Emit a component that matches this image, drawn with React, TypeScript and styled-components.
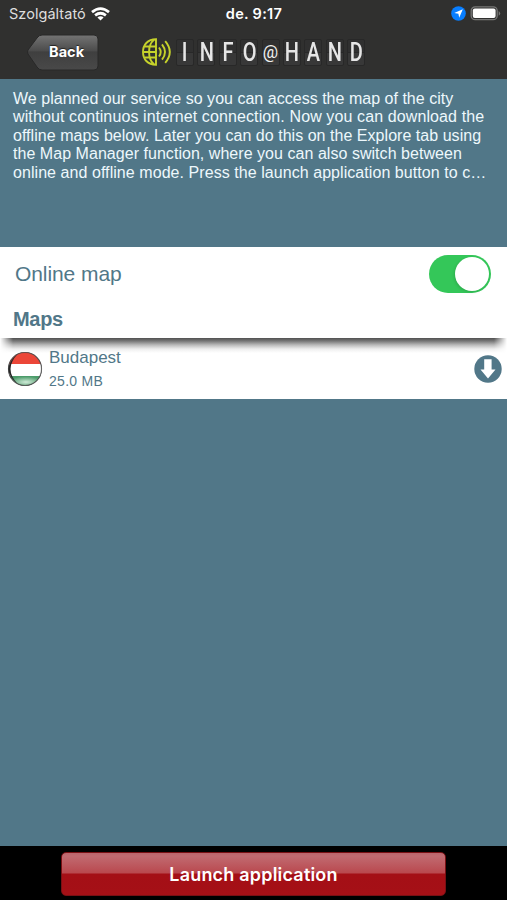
import React from "react";
import styled, { createGlobalStyle } from "styled-components";

const slate = "#517788";

const GlobalStyle = createGlobalStyle`
  * { box-sizing: border-box; }
  body { margin: 0; background: ${slate}; }
`;

const Screen = styled.div`
  width: 507px;
  height: 900px;
  display: flex;
  flex-direction: column;
  overflow: hidden;
  background: ${slate};
  font-family: "Liberation Sans", Arial, sans-serif;
`;

const Header = styled.header`
  flex: none;
  height: 79px;
  background: #30302f;
  color: #fff;
`;

const StatusBar = styled.div`
  display: grid;
  grid-template-columns: 1fr auto 1fr;
  align-items: center;
  height: 27px;
  padding: 0 6px 0 9px;
  font-family: Inter, sans-serif;
`;

const Carrier = styled.div`
  display: flex;
  align-items: center;
  gap: 6px;
  color: #dededd;
  font-size: 14.5px;
  letter-spacing: 0.04px;
  svg { margin-left: -1px; }
`;

const Clock = styled.div`
  padding-right: 2px;
  font-size: 14.5px;
  font-weight: 600;
  letter-spacing: 0.3px;
`;

const Indicators = styled.div`
  display: flex;
  justify-content: flex-end;
  align-items: center;
  gap: 4px;
`;

const NavBar = styled.div`
  display: flex;
  align-items: flex-start;
  height: 52px;
  padding: 7px 0 0 26px;
`;

const BackButton = styled.button`
  position: relative;
  width: 73px;
  height: 38px;
  padding: 0;
  border: 0;
  background: none;
  color: #fff;
  svg { display: block; }
`;

const BackLabel = styled.span`
  position: absolute;
  left: 23px;
  top: 9px;
  font: 700 14.5px/18px Inter, sans-serif;
  letter-spacing: 0.05px;
  text-shadow: 0 -1px 1px #222;
`;

const Brand = styled.div`
  display: flex;
  align-items: center;
  margin: 3px 0 0 42px;
`;

const Tiles = styled.div`
  display: flex;
  gap: 3.4px;
  margin-left: 4px;
`;

const Tile = styled.span<{ $small?: boolean }>`
  display: flex;
  align-items: center;
  justify-content: center;
  width: 18px;
  height: 27px;
  border: 1px solid #282828;
  border-radius: 2px;
  background: linear-gradient(#303030 0 12px, #282828 12px 13px, #383838 13px);
  color: ${(p) => (p.$small ? "#f1f1f1" : "#e6e6e6")};
  font: ${(p) => (p.$small ? "400 19px" : "500 25px")}/25px Roboto, sans-serif;
  span { display: block; transform: scaleX(${(p) => (p.$small ? 0.9 : 0.8)}) translateY(${(p) => (p.$small ? "-1px" : "0")}); }
`;

const Intro = styled.section`
  flex: none;
  height: 168px;
  padding: 11px 0 0 13px;
  color: #edf8fc;
  font-size: 16px;
  line-height: 18.4px;
`;

const Line = styled.div<{ $track: number }>`
  white-space: nowrap;
  letter-spacing: ${(p) => p.$track}px;
`;

const MapPanel = styled.section`
  position: relative;
  z-index: 1;
  flex: none;
  height: 91px;
  background: #fff;
  color: ${slate};
`;

const OnlineRow = styled.div`
  display: flex;
  align-items: center;
  justify-content: space-between;
  height: 53px;
  padding: 0 16px 0 15px;
  font-size: 21px;
  letter-spacing: -0.08px;
`;

const Toggle = styled.button`
  display: flex;
  justify-content: flex-end;
  align-items: center;
  width: 62px;
  height: 38px;
  padding: 0 2px;
  border: 0;
  border-radius: 19px;
  background: #34c759;
`;

const Knob = styled.span`
  width: 34px;
  height: 34px;
  border-radius: 50%;
  background: #fff;
  box-shadow: -1px 1px 3px #0002;
`;

const Heading = styled.h2`
  margin: 0;
  padding: 7px 13px 0;
  font-size: 20px;
  line-height: 24px;
  letter-spacing: -0.3px;
`;

const CityRow = styled.div`
  position: relative;
  display: flex;
  align-items: center;
  flex: none;
  height: 61px;
  padding: 0 5px 0 7px;
  background: #fff;
  color: ${slate};
`;

const PanelShadow = styled.div`
  position: absolute;
  inset: 0 0 auto;
  height: 16px;
  background: linear-gradient(#505050, #777 3px, #bbb 7px, #eee 11px, #fff 15px);
  mask-image: linear-gradient(90deg, transparent, #000 13px calc(100% - 13px), transparent);
`;

const CityInfo = styled.div`
  position: relative;
  flex: 1;
  align-self: flex-start;
  padding: 9px 0 0 6px;
`;

const City = styled.div`
  font-size: 17px;
  line-height: 22px;
`;

const Size = styled.div`
  margin-top: 3px;
  font-size: 14px;
  line-height: 19px;
  letter-spacing: 0.28px;
`;

const Flag = styled.svg`
  position: relative;
  display: block;
`;

const Footer = styled.footer`
  display: flex;
  justify-content: center;
  flex: none;
  height: 54px;
  margin-top: auto;
  padding-top: 6px;
  background: #000;
`;

const LaunchButton = styled.button`
  width: 385px;
  height: 44px;
  padding: 1px 0 0;
  border: 1px solid #791014;
  border-radius: 5px;
  background: linear-gradient(#ba656c 0, #c16b71 3px, #b9484e 20px, #a40f16 21px, #a51016 100%);
  color: #fff;
  font: 600 18px/41px Inter, sans-serif;
  letter-spacing: 0.2px;
`;

const paragraph = [
  { text: "We planned our service so you can access the map of the city", track: 0.02 },
  { text: "without continuos internet connection. Now you can download the", track: 0.11 },
  { text: "offline maps below. Later you can do this on the Explore tab using", track: 0.035 },
  { text: "the Map Manager function, where you can also switch between", track: 0.04 },
  { text: "online and offline mode. Press the launch application button to c…", track: 0.06 },
];

const WifiIcon = () => (
  <svg width="19" height="14" viewBox="0 0 19 14" fill="none" stroke="#fff" strokeWidth="2.7">
    <path d="M1 5.1Q9.5-2 18 5.1M4.1 8.4Q9.5 4.1 14.9 8.4" />
    <path d="M6.4 10.5Q9.5 8 12.6 10.5L9.5 13.6Z" fill="#fff" stroke="none" />
  </svg>
);

const LocationIcon = () => (
  <svg width="15" height="15" viewBox="0 0 15 15">
    <circle cx="7.5" cy="7.5" r="7.3" fill="#087eff" />
    <path d="m11.8 3.2-3.6 8.6-.8-4.1-4.1-.8Z" fill="#fff" />
  </svg>
);

const BatteryIcon = () => (
  <svg width="31" height="15" viewBox="0 0 31 15">
    <rect x="1.2" y=".9" width="26" height="12.8" rx="4" fill="none" stroke="#777776" strokeWidth="1.3" />
    <rect x="2.8" y="2.5" width="22.8" height="9.6" rx="2" fill="#fff" />
    <path d="M28.7 5q3 2.4 0 4.8" fill="#777776" />
  </svg>
);

const BackShape = () => (
  <svg width="73" height="38" viewBox="0 0 73 38">
    <defs>
      <linearGradient id="backFill" x2="0" y2="1">
        <stop stopColor="#747474" />
        <stop offset=".46" stopColor="#4b4b4b" />
        <stop offset=".48" stopColor="#3f3f3f" />
        <stop offset="1" stopColor="#494949" />
      </linearGradient>
    </defs>
    <path d="M16 1H68Q72 1 72 5V32Q72 36 68 36H16Q13 36 11 33L2 20Q1 18 2 16L11 4Q13 1 16 1Z" fill="url(#backFill)" stroke="#282828" />
  </svg>
);

const GlobeIcon = () => (
  <svg width="31" height="30" viewBox="0 0 31 30" fill="none" stroke="#c6d22b" strokeWidth="1.9">
    <path d="M15 2.2C6.5 2.2 2 8 2 15s4.5 12.8 13 12.8Z" />
    <path d="M13 2.8C6.4 8 6.4 22 13 27.2M3.5 9.5H15M2 15h13M3.5 20.5H15" />
    <path d="M18 10.5q3.4 4.5 0 9M21 7.3q6 7.7 0 15.4M24.2 4.2q9.2 10.8 0 21.6" />
  </svg>
);

const HungaryFlag = () => (
  <Flag width="36" height="36" viewBox="0 0 36 36">
    <defs>
      <clipPath id="flagDisc"><circle cx="18" cy="18" r="16.4" /></clipPath>
      <radialGradient id="flagGreen" cx=".5" cy=".55" r=".5">
        <stop stopColor="#d0ead8" />
        <stop offset="1" stopColor="#4c9c6a" />
      </radialGradient>
    </defs>
    <circle cx="18" cy="18" r="17" fill="#373737" />
    <g clipPath="url(#flagDisc)">
      <path d="M2 0H36V13H2Z" fill="#eb4638" />
      <path d="M2 13H36V25H2Z" fill="#fff" />
      <path d="M2 25H36V36H2Z" fill="url(#flagGreen)" />
    </g>
    <circle cx="18" cy="18" r="16.5" fill="none" stroke="#555555a0" strokeWidth="1.2" />
    <path d="M11 2.8Q-8 18 11 33.2Q-4 18 11 2.8Z" fill="#252525" />
  </Flag>
);

const DownloadIcon = () => (
  <svg width="28" height="28" viewBox="0 0 28 28">
    <circle cx="14" cy="14" r="13.7" fill={slate} />
    <path d="M10.2 4.2h7.4v10.2h3.9L14 23.5l-7.5-9.1h3.7Z" fill="#fff" />
  </svg>
);

export default function App() {
  return (
    <Screen>
      <GlobalStyle />
      <Header>
        <StatusBar>
          <Carrier>Szolgáltató <WifiIcon /></Carrier>
          <Clock>de. 9:17</Clock>
          <Indicators><LocationIcon /><BatteryIcon /></Indicators>
        </StatusBar>
        <NavBar>
          <BackButton><BackShape /><BackLabel>Back</BackLabel></BackButton>
          <Brand>
            <GlobeIcon />
            <Tiles>
              {[..."INFO@HAND"].map((letter, index) => (
                <Tile key={index} $small={letter === "@"}><span>{letter}</span></Tile>
              ))}
            </Tiles>
          </Brand>
        </NavBar>
      </Header>
      <Intro>
        {paragraph.map((line) => <Line key={line.text} $track={line.track}>{line.text}</Line>)}
      </Intro>
      <MapPanel>
        <OnlineRow>
          <span>Online map</span>
          <Toggle role="switch" aria-checked="true" aria-label="Online map"><Knob /></Toggle>
        </OnlineRow>
        <Heading>Maps</Heading>
      </MapPanel>
      <CityRow>
        <PanelShadow />
        <HungaryFlag />
        <CityInfo><City>Budapest</City><Size>25.0 MB</Size></CityInfo>
        <DownloadIcon />
      </CityRow>
      <Footer><LaunchButton>Launch application</LaunchButton></Footer>
    </Screen>
  );
}
